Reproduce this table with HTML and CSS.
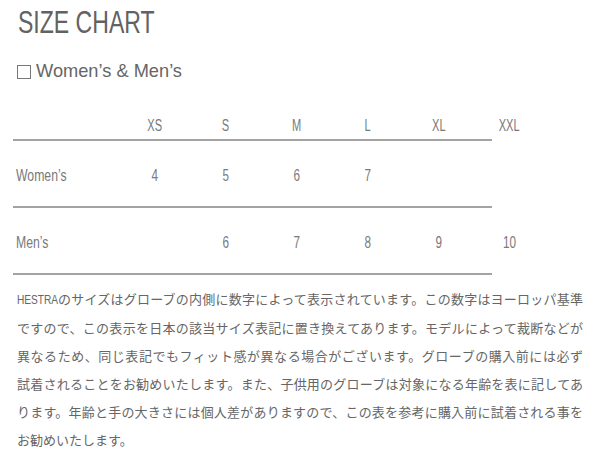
FILE: index.html
```html
<!DOCTYPE html>
<html lang="ja">
<head>
<meta charset="utf-8">
<title>SIZE CHART</title>
<link rel="stylesheet" href="styles.css">
</head>
<body>
<div class="page">
  <h1 class="title"><span class="cond">SIZE CHART</span></h1>
  <h2 class="subtitle"><span class="box"></span><span class="cond">Women’s &amp; Men’s</span></h2>
  <div class="table">
    <div class="row head">
      <div class="label"></div>
      <div class="cell"><span class="cond">XS</span></div>
      <div class="cell"><span class="cond">S</span></div>
      <div class="cell"><span class="cond">M</span></div>
      <div class="cell"><span class="cond">L</span></div>
      <div class="cell"><span class="cond">XL</span></div>
      <div class="cell"><span class="cond">XXL</span></div>
    </div>
    <div class="row data">
      <div class="label"><span class="cond">Women’s</span></div>
      <div class="cell"><span class="cond">4</span></div>
      <div class="cell"><span class="cond">5</span></div>
      <div class="cell"><span class="cond">6</span></div>
      <div class="cell"><span class="cond">7</span></div>
      <div class="cell"></div>
      <div class="cell"></div>
    </div>
    <div class="row data">
      <div class="label"><span class="cond">Men’s</span></div>
      <div class="cell"></div>
      <div class="cell"><span class="cond">6</span></div>
      <div class="cell"><span class="cond">7</span></div>
      <div class="cell"><span class="cond">8</span></div>
      <div class="cell"><span class="cond">9</span></div>
      <div class="cell"><span class="cond">10</span></div>
    </div>
  </div>
  <p class="note">
    <span class="line"><span class="latin">HESTRA</span>のサイズはグローブの内側に数字によって表示されています。この数字はヨーロッパ基準</span>
    <span class="line">ですので、この表示を日本の該当サイズ表記に置き換えてあります。モデルによって裁断などが</span>
    <span class="line">異なるため、同じ表記でもフィット感が異なる場合がございます。グローブの購入前には必ず</span>
    <span class="line">試着されることをお勧めいたします。また、子供用のグローブは対象になる年齢を表に記してあ</span>
    <span class="line">ります。年齢と手の大きさには個人差がありますので、この表を参考に購入前に試着される事を</span>
    <span class="line last">お勧めいたします。</span>
  </p>
</div>
</body>
</html>
```
FILE: styles.css
```css
* { box-sizing: border-box; }
html, body { margin: 0; padding: 0; background: #fff; }
body {
  width: 600px;
  height: 470px;
  overflow: hidden;
  font-family: "Liberation Sans", Arial, sans-serif;
  color: #7a7a7a;
}
.page {
  padding: 2px 0 0 0;
}
.cond {
  display: inline-block;
  white-space: nowrap;
}
.title {
  margin: 0 0 17px 18px;
  font-size: 32px;
  line-height: 40px;
  font-weight: normal;
  color: #626262;
}
.title .cond {
  transform: scaleX(0.72);
  transform-origin: left center;
}
.subtitle {
  display: flex;
  align-items: center;
  gap: 5px;
  margin: 0 0 0 17px;
  font-size: 19px;
  line-height: 24px;
  font-weight: normal;
  color: #666;
}
.subtitle .cond {
  transform: scaleX(0.96);
  transform-origin: left center;
}
.box {
  width: 14px;
  height: 14px;
  border: 1px solid #777;
  margin-top: 1px;
}
.table {
  margin-left: 13px;
  width: 479px;
}
.row {
  display: grid;
  grid-template-columns: 106px repeat(6, 71px);
  border-bottom: 2px solid #a3a3a3;
}
.row.head {
  height: 58px;
  align-items: end;
  padding-bottom: 3px;
  font-size: 16px;
  line-height: 20px;
}
.row.data {
  height: 67px;
  padding-top: 25px;
  font-size: 17px;
  line-height: 20px;
}
.label { padding-left: 3px; }
.label .cond {
  transform: scaleX(0.72);
  transform-origin: left center;
}
.cell { text-align: center; }
.cell .cond {
  transform: scaleX(0.69);
  transform-origin: center center;
}
.note {
  margin: 10px 0 0 17px;
  width: 566px;
  font-family: "Noto Sans CJK JP", sans-serif;
  font-size: 13px;
  line-height: 28px;
  color: #666;
}
.note .line {
  display: block;
  text-align: justify;
  text-align-last: justify;
  white-space: nowrap;
}
.note .line.last { text-align-last: left; }
.latin {
  display: inline-block;
  font-family: "Liberation Sans", Arial, sans-serif;
  transform: scaleX(0.78);
  transform-origin: left center;
  margin-right: -12px;
}
```
